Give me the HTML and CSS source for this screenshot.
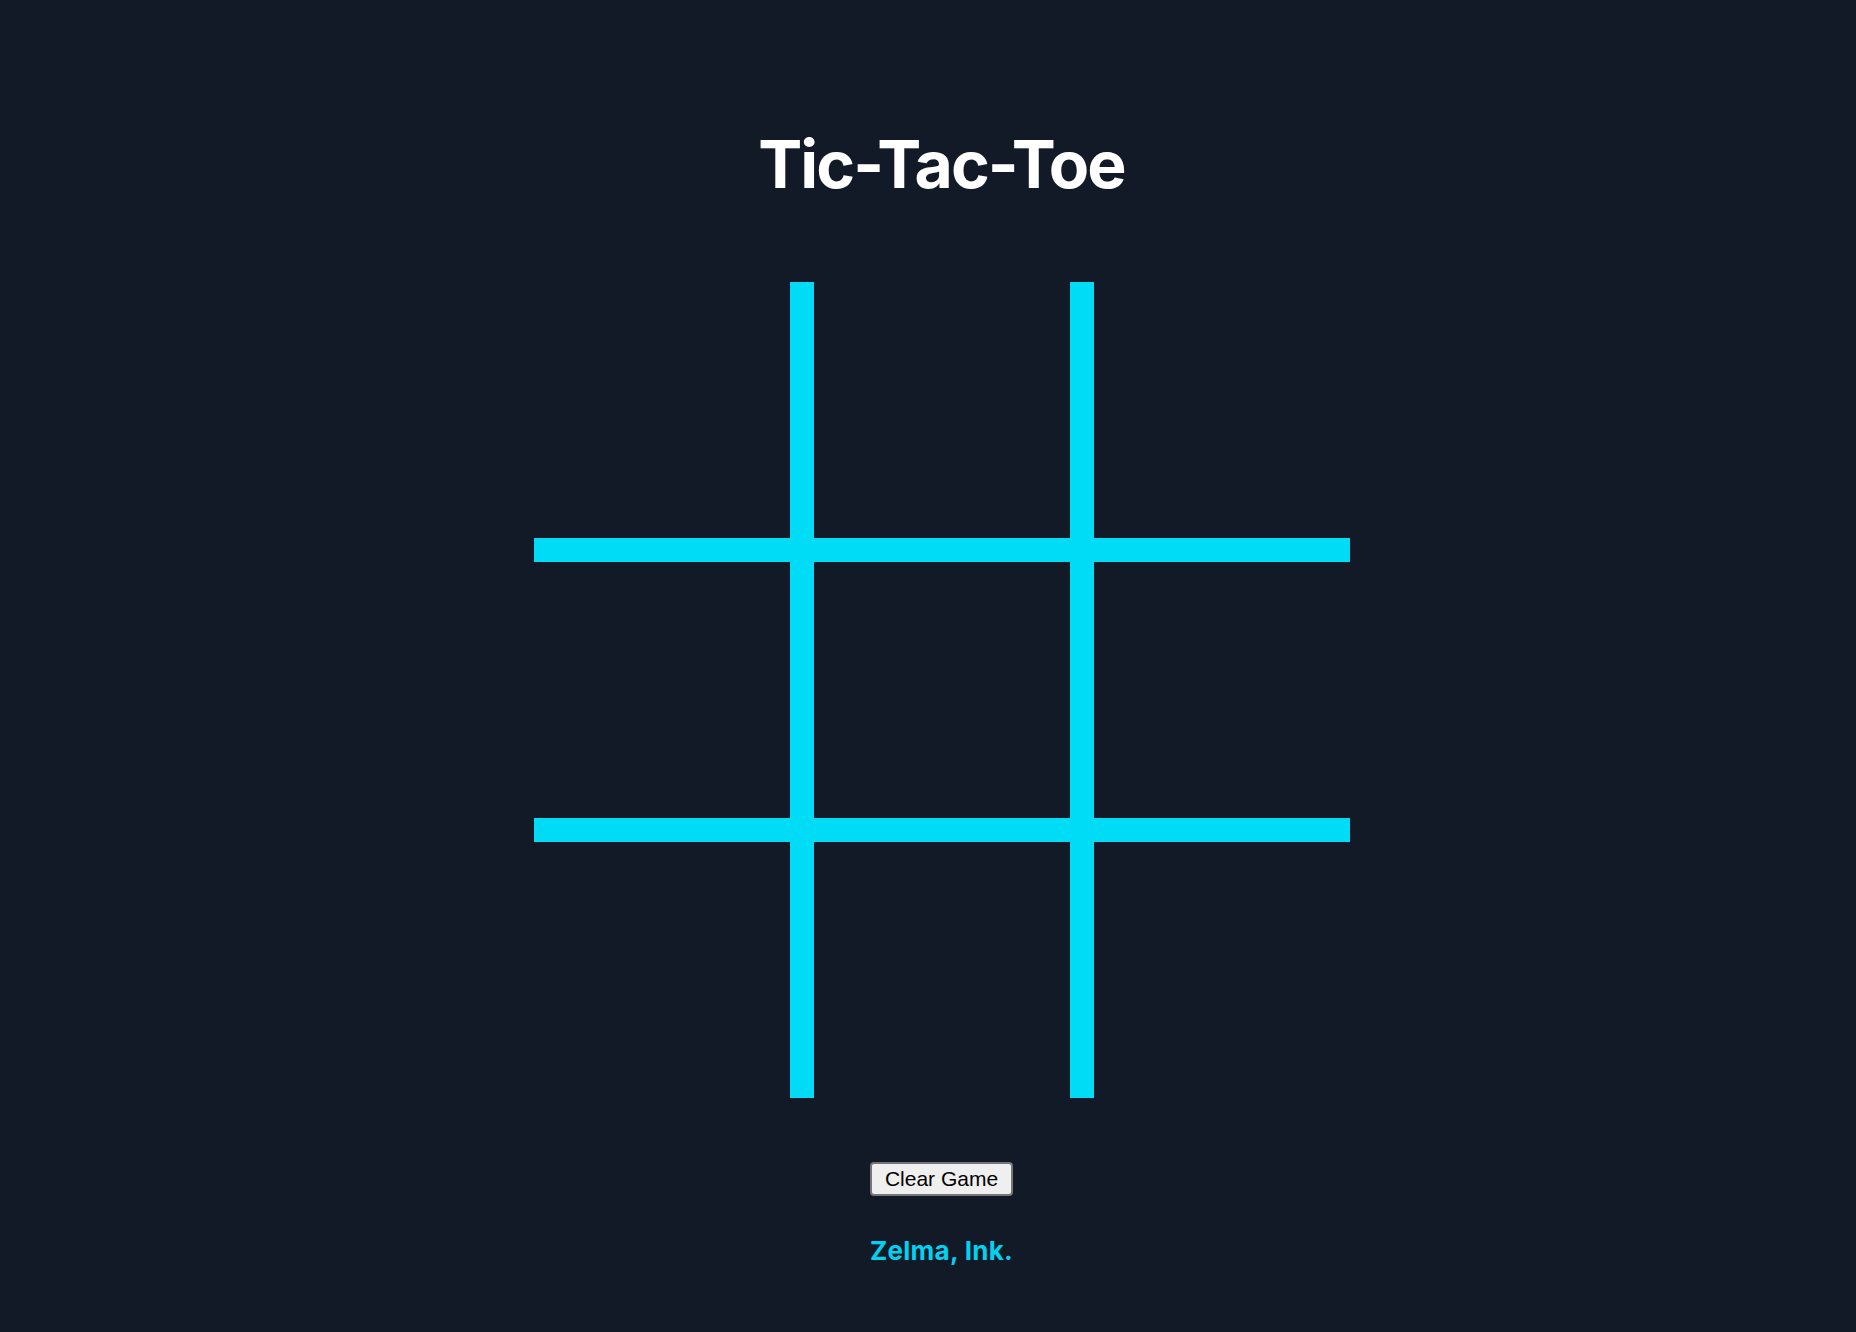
FILE: index.html
```html
<!DOCTYPE html>
<html lang="en">
<head>
<meta charset="utf-8">
<title>Tic-Tac-Toe</title>
<link rel="stylesheet" href="styles.css">
</head>
<body>
<main class="page">
  <h1 class="title">Tic-Tac-Toe</h1>
  <div class="board">
    <div class="cell"></div><div class="cell"></div><div class="cell"></div>
    <div class="cell"></div><div class="cell"></div><div class="cell"></div>
    <div class="cell"></div><div class="cell"></div><div class="cell"></div>
  </div>
  <button class="clear" type="button">Clear Game</button>
  <p class="credit">Zelma, Ink.</p>
</main>
</body>
</html>
```

FILE: styles.css
```css
html, body {
  margin: 0;
  padding: 0;
  background: #121927;
  min-height: 100%;
}
body {
  height: 1332px;
  overflow: hidden;
}
.page {
  display: flex;
  flex-direction: column;
  align-items: center;
  padding: 124px 0 0 27px;
  font-family: Inter, "Noto Sans", sans-serif;
}
.title {
  margin: 0;
  font-size: 66px;
  line-height: 80px;
  font-weight: 700;
  color: #ffffff;
  letter-spacing: -1.9px;
}
.board {
  margin-top: 78px;
  display: grid;
  grid-template-columns: repeat(3, 256px);
  grid-template-rows: repeat(3, 256px);
  gap: 24px;
  background: #00dcf5;
}
.cell {
  background: #121927;
}
.clear {
  margin-top: 64px;
  font-family: "Liberation Sans", Arial, sans-serif;
  font-size: 21px;
  line-height: 24px;
  padding: 3px 13px;
  color: #000;
  background: #efefef;
  border: 2px solid #767676;
  border-radius: 4px;
}
.credit {
  margin: 40px 0 0;
  font-size: 26px;
  line-height: 30px;
  font-weight: 700;
  color: #00d2ef;
  letter-spacing: 0.3px;
}
```
